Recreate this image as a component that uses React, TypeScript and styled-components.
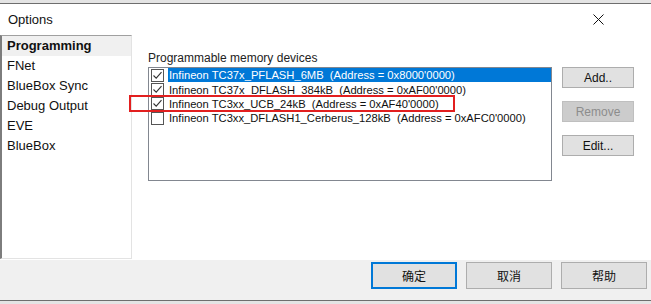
import React from "react";
import styled, { createGlobalStyle } from "styled-components";

const Global = createGlobalStyle`
  html, body { margin: 0; padding: 0; background: #e9e9e9; }
  body { font-family: "Liberation Sans", Arial, sans-serif; }
`;

const Screen = styled.div`
  width: 651px;
  height: 304px;
  display: flex;
  flex-direction: column;
  overflow: hidden;
`;

const BackStrip = styled.div<{ top?: boolean }>`
  height: 4px;
  flex: none;
  background: #e4e4e4;
  border-${(p) => (p.top ? "bottom" : "top")}: 1px solid #6e6e6e;
  box-sizing: border-box;
`;

const Dialog = styled.div`
  height: 256px;
  flex: none;
  background: #fff;
  display: flex;
  flex-direction: column;
`;

const TitleBar = styled.div`
  height: 31px;
  flex: none;
  display: flex;
  align-items: center;
  justify-content: space-between;
  padding: 0 47px 0 8px;
  font-size: 13px;
  color: #111;
`;

const Body = styled.div`
  flex: 1;
  display: flex;
  padding-bottom: 1px;
`;

const Nav = styled.ul`
  width: 132px;
  margin: 0;
  padding: 0;
  list-style: none;
  box-sizing: border-box;
  border-top: 1px solid #a0a0a0;
  border-left: 2px solid #7d7d7d;
  border-right: 1px solid #e3e3e3;
  border-bottom: 1px solid #e3e3e3;
`;

const NavItem = styled.li<{ active?: boolean }>`
  height: 20px;
  line-height: 20px;
  padding-left: 5px;
  font-size: 13px;
  color: #111;
  font-weight: ${(p) => (p.active ? 700 : 400)};
  background: ${(p) => (p.active ? "#f0f0f0" : "transparent")};
`;

const Content = styled.div`
  position: relative;
  flex: 1;
  display: flex;
  padding: 14px 0 0 16px;
`;

const Group = styled.div`
  display: flex;
  flex-direction: column;
  width: 404px;
`;

const Caption = styled.div`
  font-size: 12px;
  color: #222;
  height: 18px;
  line-height: 18px;
`;

const ListBox = styled.div`
  height: 114px;
  border: 1px solid #828790;
  box-sizing: border-box;
`;

const Row = styled.div`
  height: 14.4px;
  display: flex;
  align-items: center;
  padding-left: 2px;
`;

const Box = styled.span`
  width: 13px;
  height: 13px;
  flex: none;
  box-sizing: border-box;
  border: 1px solid #555;
  background: #fff;
  display: flex;
  align-items: center;
  justify-content: center;
`;

const RowText = styled.span<{ selected?: boolean }>`
  flex: 1;
  margin-left: 4px;
  padding-left: 1px;
  height: 14px;
  line-height: 14px;
  font-size: 11.2px;
  white-space: pre;
  color: ${(p) => (p.selected ? "#fff" : "#111")};
  background: ${(p) => (p.selected ? "#0078d7" : "transparent")};
`;

const SideButtons = styled.div`
  display: flex;
  flex-direction: column;
  gap: 13px;
  margin: 18px 0 0 10px;
`;

const Button = styled.button<{ disabled?: boolean }>`
  width: 72px;
  height: 21px;
  padding: 0;
  font-family: "Liberation Sans", Arial, sans-serif;
  font-size: 12px;
  color: ${(p) => (p.disabled ? "#8c8c8c" : "#111")};
  background: ${(p) => (p.disabled ? "#cccccc" : "#e1e1e1")};
  border: 1px solid ${(p) => (p.disabled ? "#bfbfbf" : "#adadad")};
`;

const Marker = styled.div`
  position: absolute;
  left: -3px;
  top: 60px;
  width: 326px;
  height: 17px;
  border: 2px solid #e21f1f;
  box-sizing: border-box;
  pointer-events: none;
`;

const Footer = styled.div`
  height: 40px;
  flex: none;
  background: #f0f0f0;
  display: flex;
  justify-content: flex-end;
  align-items: flex-start;
  gap: 9px;
  padding: 2px 4px 0 0;
  box-sizing: border-box;
`;

const DlgButton = styled.button<{ primary?: boolean }>`
  width: 86px;
  height: 27px;
  padding: 0;
  font-family: "Noto Sans CJK SC", "Liberation Sans", sans-serif;
  font-size: 12px;
  color: #111;
  background: #e1e1e1;
  box-sizing: border-box;
  border: ${(p) => (p.primary ? "2px solid #0078d7" : "1px solid #adadad")};
`;

const Check = () => (
  <svg width="11" height="11" viewBox="0 0 11 11">
    <path d="M1.5 5.5 L4.2 8.2 L9.5 2.2" fill="none" stroke="#333" strokeWidth="1.1" />
  </svg>
);

const Close = () => (
  <svg width="11" height="11" viewBox="0 0 11 11">
    <path d="M0.5 0.5 L10.5 10.5 M10.5 0.5 L0.5 10.5" stroke="#111" strokeWidth="1" />
  </svg>
);

const devices = [
  { name: "Infineon TC37x_PFLASH_6MB  (Address = 0x8000'0000)", checked: true, selected: true },
  { name: "Infineon TC37x_DFLASH_384kB  (Address = 0xAF00'0000)", checked: true },
  { name: "Infineon TC3xx_UCB_24kB  (Address = 0xAF40'0000)", checked: true },
  { name: "Infineon TC3xx_DFLASH1_Cerberus_128kB  (Address = 0xAFC0'0000)", checked: false },
];

const pages = ["Programming", "FNet", "BlueBox Sync", "Debug Output", "EVE", "BlueBox"];

const App: React.FC = () => {
  return (
    <Screen>
      <Global />
      <BackStrip top />
      <Dialog>
        <TitleBar>
          <span>Options</span>
          <Close />
        </TitleBar>
        <Body>
          <Nav>
            {pages.map((p, i) => (
              <NavItem key={p} active={i === 0}>
                {p}
              </NavItem>
            ))}
          </Nav>
          <Content>
            <Group>
              <Caption>Programmable memory devices</Caption>
              <ListBox>
                {devices.map((d) => (
                  <Row key={d.name}>
                    <Box>{d.checked && <Check />}</Box>
                    <RowText selected={d.selected}>{d.name}</RowText>
                  </Row>
                ))}
              </ListBox>
            </Group>
            <SideButtons>
              <Button>Add..</Button>
              <Button disabled>Remove</Button>
              <Button>Edit...</Button>
            </SideButtons>
            <Marker />
          </Content>
        </Body>
      </Dialog>
      <Footer>
        <DlgButton primary>确定</DlgButton>
        <DlgButton>取消</DlgButton>
        <DlgButton>帮助</DlgButton>
      </Footer>
      <BackStrip />
    </Screen>
  );
};

export default App;
